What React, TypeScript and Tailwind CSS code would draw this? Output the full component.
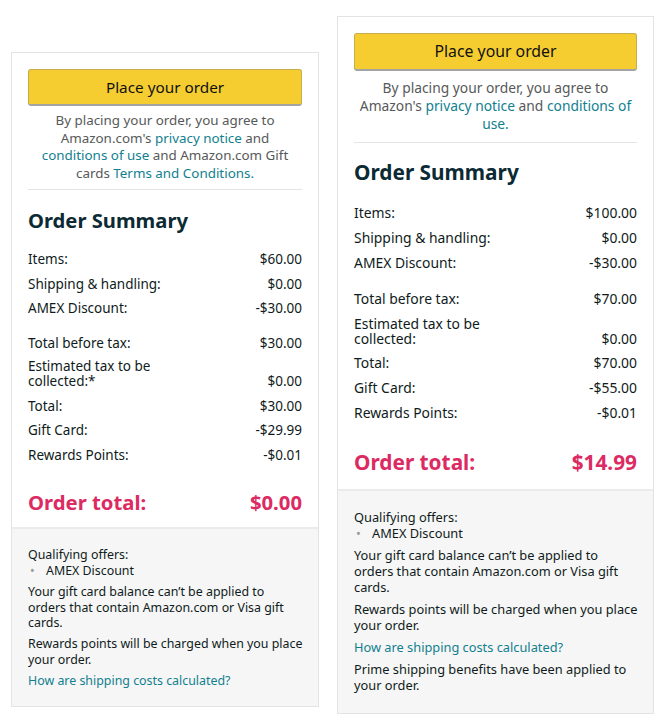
type Line = { label: React.ReactNode; value: string; gap?: boolean; twoLine?: boolean }

type Sizes = {
  panel: string
  button: string
  btnText: string
  disclaimer: string
  sep: string
  heading: string
  rows: string
  rowGap: string
  twoLine: string
  totalWrap: string
  total: string
  notes: string
  noteGap: string
}

const leftSizes: Sizes = {
  panel: "mt-[52px] w-[308px]",
  button: "h-[37px]",
  btnText: "text-[15.3px]",
  disclaimer: "mt-[6px] text-[13.4px] leading-[17.6px]",
  sep: "mt-[7px]",
  heading: "mt-[16px] text-[20.2px] leading-[28px]",
  rows: "mt-[17px] gap-[8.5px] text-[13.5px] leading-[16px]",
  rowGap: "mt-[10px]",
  twoLine: "leading-[15px]",
  totalWrap: "mt-[25px] pb-[11px]",
  total: "text-[20.3px] leading-[28px]",
  notes: "pt-[18px] pb-[18px] text-[12.4px] leading-[16px]",
  noteGap: "mt-[5.5px] leading-[15.5px]",
}

const rightSizes: Sizes = {
  panel: "mt-[16px] w-[317px]",
  button: "h-[38px]",
  btnText: "text-[15.8px]",
  disclaimer: "mt-[8px] text-[13.8px] leading-[18px]",
  sep: "mt-[9px]",
  heading: "mt-[15px] text-[20.8px] leading-[28px]",
  rows: "mt-[19px] gap-[9px] text-[13.9px] leading-[16px]",
  rowGap: "mt-[11px]",
  twoLine: "leading-[15px]",
  totalWrap: "mt-[27px] pb-[13px]",
  total: "text-[20.8px] leading-[28px]",
  notes: "pt-[18px] pb-[20px] text-[12.8px] leading-[16px]",
  noteGap: "mt-[6px] leading-[16px]",
}

const link = "text-[#11808f]"

function Panel({
  s,
  disclaimer,
  lines,
  total,
  notes,
}: {
  s: Sizes
  disclaimer: React.ReactNode
  lines: Line[]
  total: string
  notes: React.ReactNode[]
}) {
  return (
    <div className={`${s.panel} border border-[#e3e3e3] bg-white`}>
      <div className="px-[16px] pt-[16px]">
        <button
          className={`${s.button} w-full rounded-[3px] border border-[#c7ad4c] border-b-[2px] border-b-[#a3a3a3] bg-[#f6cd30] ${s.btnText} text-[#111]`}
        >
          Place your order
        </button>
        <p className={`${s.disclaimer} whitespace-nowrap text-center text-[#565959]`}>{disclaimer}</p>
        <div className={`${s.sep} h-px bg-[#e4e4e4]`} />
        <h2 className={`${s.heading} font-bold text-[#0c2a33]`}>Order Summary</h2>
        <div className={`${s.rows} flex flex-col text-[#0f1b20]`}>
          {lines.map((l, i) => (
            <div key={i} className={`flex items-end justify-between ${l.gap ? s.rowGap : ""}`}>
              <span className={l.twoLine ? s.twoLine : ""}>{l.label}</span>
              <span className={l.twoLine ? s.twoLine : ""}>{l.value}</span>
            </div>
          ))}
        </div>
        <div className={`${s.totalWrap} flex justify-between font-bold text-[#dc2a62] ${s.total}`}>
          <span>Order total:</span>
          <span>{total}</span>
        </div>
      </div>
      <div
        className={`whitespace-nowrap border-t-[2px] border-[#ebebeb] bg-[#f6f6f6] px-[16px] ${s.notes} text-[#0f1b20]`}
      >
        <div>Qualifying offers:</div>
        <div className="flex">
          <span className="w-[18px] pl-[2px] text-[#9a9a9a]">•</span>
          <span>AMEX Discount</span>
        </div>
        {notes.map((n, i) => (
          <p key={i} className={s.noteGap}>
            {n}
          </p>
        ))}
      </div>
    </div>
  )
}

export default function App() {
  const leftLines: Line[] = [
    { label: "Items:", value: "$60.00" },
    { label: "Shipping & handling:", value: "$0.00" },
    { label: "AMEX Discount:", value: "-$30.00" },
    { label: "Total before tax:", value: "$30.00", gap: true },
    {
      label: (
        <>
          Estimated tax to be
          <br />
          collected:*
        </>
      ),
      value: "$0.00",
      twoLine: true,
    },
    { label: "Total:", value: "$30.00" },
    { label: "Gift Card:", value: "-$29.99" },
    { label: "Rewards Points:", value: "-$0.01" },
  ]

  const rightLines: Line[] = [
    { label: "Items:", value: "$100.00" },
    { label: "Shipping & handling:", value: "$0.00" },
    { label: "AMEX Discount:", value: "-$30.00" },
    { label: "Total before tax:", value: "$70.00", gap: true },
    {
      label: (
        <>
          Estimated tax to be
          <br />
          collected:
        </>
      ),
      value: "$0.00",
      twoLine: true,
    },
    { label: "Total:", value: "$70.00" },
    { label: "Gift Card:", value: "-$55.00" },
    { label: "Rewards Points:", value: "-$0.01" },
  ]

  return (
    <div className="flex min-h-[728px] gap-[18px] bg-white pl-[11px] font-['Noto_Sans',Arial,sans-serif]">
      <div className="self-start">
        <Panel
          s={leftSizes}
          disclaimer={
            <>
              By placing your order, you agree to
              <br />
              Amazon.com's <span className={link}>privacy notice</span> and
              <br />
              <span className={link}>conditions of use</span> and Amazon.com Gift
              <br />
              cards <span className={link}>Terms and Conditions.</span>
            </>
          }
          lines={leftLines}
          total="$0.00"
          notes={[
            <>
              Your gift card balance can’t be applied to
              <br />
              orders that contain Amazon.com or Visa gift
              <br />
              cards.
            </>,
            <>
              Rewards points will be charged when you place
              <br />
              your order.
            </>,
            <span className={link}>How are shipping costs calculated?</span>,
          ]}
        />
      </div>
      <div className="self-start">
        <Panel
          s={rightSizes}
          disclaimer={
            <>
              By placing your order, you agree to
              <br />
              Amazon's <span className={link}>privacy notice</span> and{" "}
              <span className={link}>conditions of</span>
              <br />
              <span className={link}>use.</span>
            </>
          }
          lines={rightLines}
          total="$14.99"
          notes={[
            <>
              Your gift card balance can’t be applied to
              <br />
              orders that contain Amazon.com or Visa gift
              <br />
              cards.
            </>,
            <>
              Rewards points will be charged when you place
              <br />
              your order.
            </>,
            <span className={link}>How are shipping costs calculated?</span>,
            <>
              Prime shipping benefits have been applied to
              <br />
              your order.
            </>,
          ]}
        />
      </div>
    </div>
  )
}
